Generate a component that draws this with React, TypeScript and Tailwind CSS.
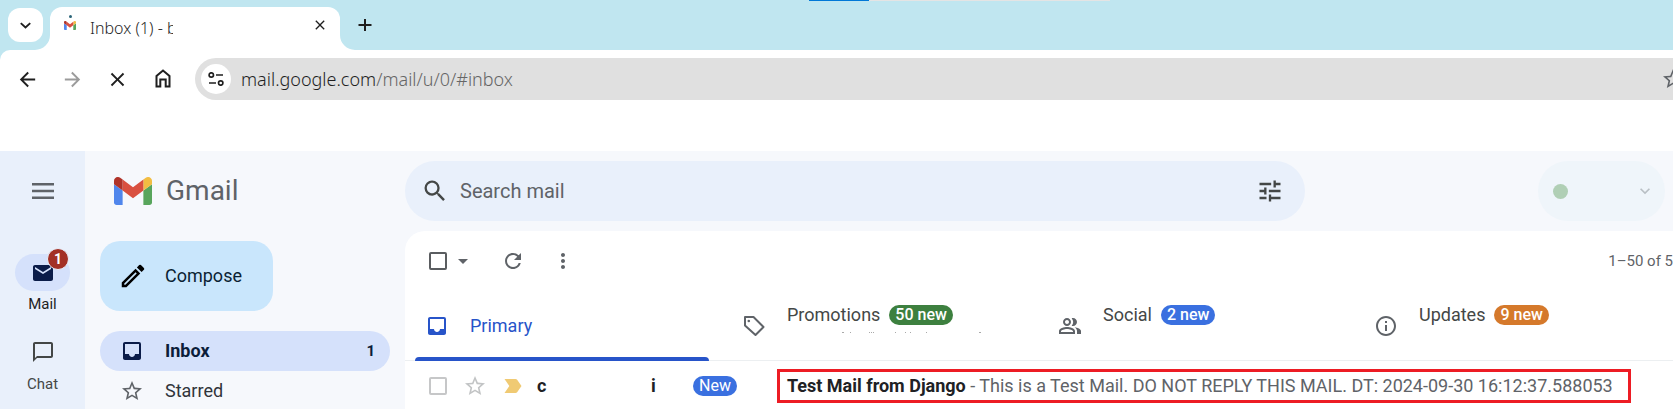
import { ReactNode } from "react";
import {
  MdArrowDropDown, MdChatBubbleOutline, MdClose, MdInfoOutline, MdLabelImportant, MdMail,
  MdMoreVert, MdOutlineModeEdit, MdRefresh, MdSearch, MdStarBorder, MdTune, MdArrowBack,
  MdArrowForward, MdExpandMore, MdInbox, MdOutlinePeopleAlt,
} from "react-icons/md";

function GmailMark({ className }: { className: string }) {
  return (
    <svg viewBox="52 42 88 66" preserveAspectRatio="none" className={className} aria-hidden="true">
      <path fill="#5086ec" d="M58 108h14V74L52 59v43c0 3.32 2.69 6 6 6" />
      <path fill="#58a55c" d="M120 108h14c3.32 0 6-2.69 6-6V59l-20 15" />
      <path fill="#f2bd42" d="M120 48v26l20-15v-8c0-7.42-8.47-11.65-14.4-7.2" />
      <path fill="#d95040" d="M72 74V48l24 18 24-18v26L96 92" />
      <path fill="#b03329" d="M52 51v8l20 15V48l-5.6-4.2c-5.94-4.45-14.4-.22-14.4 7.2" />
    </svg>
  );
}

function TabStrip() {
  return (
    <header className="relative flex h-[50px] items-start bg-[#c0e6f0] pl-2">
      <div className="absolute top-0 left-[809px] flex h-px w-[301px] bg-[#e4e4e4]">
        <div className="w-1/5 bg-[#0078d7]" />
      </div>
      <button aria-label="Search tabs" className="mt-2 flex h-[34px] w-[35px] items-center justify-center rounded-xl bg-white">
        <svg viewBox="0 0 10 6" className="h-[7px] w-[11px]" fill="none" stroke="#1f1f1f" strokeWidth="1.700">
          <path d="M.7.8 5 4.8 9.3.8" />
        </svg>
      </button>
      <div className="relative mt-[7px] ml-[7px] flex h-[43px] w-[290px] items-center rounded-t-xl bg-white pr-3 pl-3">
        <svg viewBox="0 0 15 15" className="absolute bottom-0 -left-[15px] size-[15px]" fill="#fff"><path d="M15 0A15 15 0 0 1 0 15h15z" /></svg>
        <svg viewBox="0 0 15 15" className="absolute -right-[15px] bottom-0 size-[15px]" fill="#fff"><path d="M0 0A15 15 0 0 0 15 15H0z" /></svg>
        <div className="mb-3 flex w-4 flex-col items-center gap-[3px]">
          <span className="size-[3px] rounded-full bg-[#2a6478]" />
          <GmailMark className="h-[9px] w-3" />
        </div>
        <span className="mb-[2px] ml-3 flex font-['Noto_Sans',sans-serif] text-[16px] leading-5 font-light whitespace-pre text-[#1f1f1f]">
          Inbox (1) - <span className="w-[6px] overflow-hidden">b</span>
        </span>
        <button aria-label="Close tab" className="mb-2 ml-auto text-[#1f1f1f]"><MdClose className="size-4" /></button>
      </div>
      <button aria-label="New tab" className="mt-[15px] ml-[15px] text-[#1f1f1f]">
        <svg viewBox="0 0 20 20" className="size-5" fill="currentColor"><path d="M9 4h2v5h5.500v2H11v5H9v-5H3.500V9H9z" /></svg>
      </button>
    </header>
  );
}

function AddressBar() {
  return (
    <div className="bg-[#c0e6f0]">
      <nav className="flex h-[101px] items-start rounded-tl-[10px] bg-white pt-2 pl-4 text-[#1f1f1f]">
        <div className="flex h-[42px] shrink-0 items-center gap-[22px]">
          <button aria-label="Back"><MdArrowBack className="size-[23px]" /></button>
          <button aria-label="Forward" className="text-[#9b9b9b]"><MdArrowForward className="size-[23px]" /></button>
          <button aria-label="Stop loading"><MdClose className="size-[23px]" /></button>
          <button aria-label="Home">
            <svg viewBox="0 0 24 24" className="size-6" fill="none" stroke="currentColor" strokeWidth="2">
              <path d="M5.500 19.500V9L12 3.600 18.500 9v10.500h-3.800v-7h-5.400v7z" />
            </svg>
          </button>
        </div>
        <div className="ml-5 flex h-[42px] min-w-0 flex-1 items-center rounded-l-full bg-[#e0e0e0] pl-[6px]">
          <button aria-label="View site information" className="flex size-[30px] shrink-0 items-center justify-center rounded-full bg-white">
            <svg viewBox="0 0 16 14" className="h-[14px] w-4" fill="none" stroke="#1f1f1f" strokeWidth="1.700">
              <circle cx="3.300" cy="3" r="2.200" /><path d="M8 3h7M1 11h7" /><circle cx="12.700" cy="11" r="2.200" />
            </svg>
          </button>
          <div className="ml-[10px] min-w-0 flex-1 font-['Noto_Sans',sans-serif] text-[18px] leading-6 font-light">
            mail.google.com<span className="text-[#666]">/mail/u/0/#inbox</span>
          </div>
          <button aria-label="Bookmark this tab" className="-mr-3 shrink-0 text-[#5f6368]"><MdStarBorder className="size-6" /></button>
        </div>
      </nav>
    </div>
  );
}

function Rail() {
  return (
    <nav className="flex w-[85px] shrink-0 flex-col items-center bg-[#e9f0fb] text-[15px] leading-5 text-[#444746]">
      <button aria-label="Main menu" className="mt-8 shrink-0 text-[#5f6368]">
        <svg viewBox="0 0 22 16" className="h-4 w-[22px]" fill="currentColor"><path d="M0 0h22v2.400H0zM0 6.800h22v2.400H0zM0 13.600h22V16H0z" /></svg>
      </button>
      <a href="#mail" className="mt-[55px] flex flex-col items-center text-[#1f1f1f]">
        <span className="relative flex h-[37px] w-[55px] items-center justify-center rounded-full bg-[#d5e1fb] text-[#0b1c49]">
          <MdMail className="size-6" />
          <span className="absolute -top-[6px] right-px flex size-[22px] items-center justify-center rounded-full border border-[#e9f0fb] bg-[#a33025] text-[14px] leading-5 font-bold text-white">1</span>
        </span>
        <span className="mt-[3px]">Mail</span>
      </a>
      <a href="#chat" className="mt-[26px] flex flex-col items-center">
        <MdChatBubbleOutline className="size-6" />
        <span className="mt-[10px]">Chat</span>
      </a>
    </nav>
  );
}

function Sidebar() {
  return (
    <aside className="flex w-[320px] shrink-0 flex-col pr-[15px] pl-[15px] text-[18px] leading-6">
      <div className="mt-5 flex h-10 shrink-0 items-center gap-[14px] pl-[14px] text-[28px] leading-10 text-[#5f6368]">
        <GmailMark className="h-7 w-[38px]" />Gmail
      </div>
      <button className="mt-[30px] flex h-[70px] w-[173px] shrink-0 items-center gap-[17px] rounded-[20px] bg-[#c9e6fc] pl-[18px] text-[#0b1f33]">
        <MdOutlineModeEdit className="size-[30px] text-black" />Compose
      </button>
      <a href="#inbox" className="mt-5 flex h-10 shrink-0 items-center gap-[21px] rounded-full bg-[#d5e1fb] pr-[15px] pl-5 font-bold text-[#0b1d3a]">
        <MdInbox className="size-6 text-[#0b1c49]" />Inbox<span className="ml-auto text-[15px]">1</span>
      </a>
      <a href="#starred" className="flex h-10 shrink-0 items-center gap-[21px] pl-5 text-[#30343a]">
        <MdStarBorder className="size-6 text-[#5f6368]" />Starred
      </a>
    </aside>
  );
}

type CategoryTabProps = { icon: ReactNode; label: string; count: string; color: string; children?: ReactNode };

function CategoryTab({ icon, label, count, color, children }: CategoryTabProps) {
  return (
    <button role="tab" className="relative flex h-[70px] w-[316px] shrink-0 items-center gap-[21px] pl-[21px] text-left">
      <span className="text-[#5f6368]">{icon}</span>
      <span className="mb-[22px] flex items-center gap-[9px] whitespace-nowrap text-[#444746]">
        {label}
        <span className={`rounded-full px-[6px] text-[16px] leading-5 font-medium text-white ${color}`}>{count}</span>
      </span>
      {children}
    </button>
  );
}

function MessageList() {
  return (
    <main className="mt-[10px] flex-1 overflow-hidden rounded-tl-[20px] bg-white text-[#5f6368]">
      <div className="flex h-[60px] items-center pl-6">
        <input type="checkbox" aria-label="Select all" className="size-[18px] appearance-none rounded-xs border-2 border-[#5a5d60]" />
        <button aria-label="Selection options" className="ml-1"><MdArrowDropDown className="size-6" /></button>
        <button aria-label="Refresh" className="ml-[26px]"><MdRefresh className="size-6" /></button>
        <button aria-label="More" className="ml-[26px]"><MdMoreVert className="size-6" /></button>
        <span className="ml-auto text-[15px] leading-5 whitespace-nowrap">1–50 of 5</span>
      </div>
      <div role="tablist" className="flex h-[70px] border-b border-[#eceff1] text-[18px] leading-5">
        <button role="tab" aria-selected="true" className="relative flex h-[70px] w-[316px] shrink-0 items-center gap-[21px] pl-5 text-[#2754c9]">
          <MdInbox className="size-6" />Primary
          <span className="absolute right-3 bottom-0 left-[10px] h-1 rounded-t bg-[#2754c9]" />
        </button>
        <CategoryTab icon={<svg viewBox="0 0 24 24" className="size-6" fill="none" stroke="currentColor" strokeWidth="2"><path d="M3 3h8.500L21.500 13l-8 8L3 11.500z" strokeLinejoin="round" /><circle cx="6.800" cy="7" r="1.300" fill="currentColor" stroke="none" /></svg>} label="Promotions" count="50 new" color="bg-[#3d803f]">
          <svg viewBox="0 0 140 1" className="absolute top-[41px] left-[121px] h-px w-[140px]" fill="#a9a9a9" aria-hidden="true">
            <path d="M0 0h2v1H0zM8 0h1v1H8zM27 0h1v1h-1zM29 0h1v1h-1zM31 0h1v1h-1zM53 0h1v1h-1zM63 0h1v1h-1zM68 0h1v1h-1zM84 0h1v1h-1zM137 0h2v1h-2z" />
          </svg>
        </CategoryTab>
        <CategoryTab icon={<MdOutlinePeopleAlt className="size-6" />} label="Social" count="2 new" color="bg-[#3a70e0]" />
        <CategoryTab icon={<MdInfoOutline className="size-6" />} label="Updates" count="9 new" color="bg-[#d5792b]" />
      </div>
      <div className="flex h-[50px] items-center pl-6 text-[18px] leading-5 whitespace-nowrap">
        <input type="checkbox" aria-label="Select message" className="size-[18px] shrink-0 appearance-none rounded-xs border-2 border-[#c6c7c8]" />
        <button aria-label="Star" className="ml-4 text-[#c2c4c5]"><MdStarBorder className="size-6" /></button>
        <button aria-label="Important" className="ml-[14px] text-[#f0ca73]"><MdLabelImportant className="size-6" /></button>
        <span className="ml-3 flex w-[156px] shrink-0 font-bold text-[#202124]"><span className="w-[114px]">c</span>i</span>
        <span className="rounded-full bg-[#3a70e0] px-[6px] text-[16px] text-white">New</span>
        <a href="#message" className="ml-10 flex h-[34px] w-[854px] shrink-0 items-center border-[3px] border-[#ed1c24] pl-[7px] whitespace-pre">
          <b className="text-[#202124]">Test Mail from Django</b> - This is a Test Mail. DO NOT REPLY THIS MAIL. DT: 2024-09-30 16:12:37.588053
        </a>
      </div>
    </main>
  );
}

export default function App() {
  return (
    <div className="flex h-screen flex-col overflow-hidden font-[Roboto,sans-serif]">
      <TabStrip />
      <AddressBar />
      <div className="flex min-h-0 flex-1 bg-[#f6f8fc]">
        <Rail />
        <Sidebar />
        <div className="flex min-w-0 flex-1 flex-col">
          <div className="mt-[10px] flex shrink-0 items-center justify-between pr-2">
            <label className="flex h-[60px] w-[900px] items-center rounded-full bg-[#e9f0fb] pr-[21px] pl-4 text-[#444746]">
              <MdSearch className="size-7" />
              <input aria-label="Search mail" placeholder="Search mail" className="ml-[11px] min-w-0 flex-1 bg-transparent text-[20px] leading-6 outline-none placeholder:text-[#5f6368]" />
              <MdTune className="size-7" />
            </label>
            <button aria-label="Status" className="flex h-[60px] w-[127px] items-center justify-between rounded-full bg-[#eff5fa] pr-[10px] pl-[15px] text-[#b9bfc4]">
              <span className="size-[15px] rounded-full bg-[#b0cfb5]" />
              <MdExpandMore className="size-5" />
            </button>
          </div>
          <MessageList />
        </div>
      </div>
    </div>
  );
}
